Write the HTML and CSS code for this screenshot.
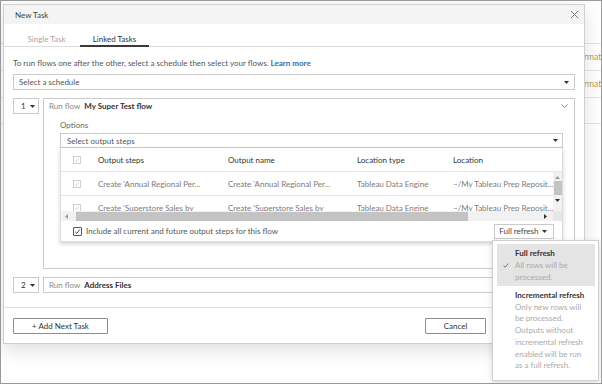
FILE: index.html
```html
<!DOCTYPE html>
<html>
<head>
<meta charset="utf-8">
<title>New Task</title>
<link rel="stylesheet" href="styles.css">
</head>
<body>
<div class="frame">
  <div class="page">
    <div class="page-head"></div>
    <div class="page-row">rmat</div>
    <div class="page-row">rmat</div>
    <div class="page-row"></div>
  </div>

  <div class="modal">
    <div class="modal-header">
      <span class="modal-title">New Task</span>
      <svg class="close" width="9" height="9" viewBox="0 0 9 9"><path d="M1 1L8 8M8 1L1 8" stroke="#777" stroke-width="1" fill="none"/></svg>
    </div>
    <div class="tabs">
      <div class="tab tab-single">Single Task</div>
      <div class="tab tab-linked active">Linked Tasks</div>
    </div>
    <div class="body">
      <p class="intro">To run flows one after the other, select a schedule then select your flows. <a class="learn">Learn more</a></p>
      <div class="select">
        <span>Select a schedule</span>
        <svg class="caret" width="5" height="3" viewBox="0 0 5 3"><path d="M0 0H5L2.5 3Z" fill="#333"/></svg>
      </div>

      <div class="task">
        <div class="num"><span>1</span><svg class="caret" width="5" height="3" viewBox="0 0 5 3"><path d="M0 0H5L2.5 3Z" fill="#333"/></svg></div>
        <div class="flow">
          <div class="flow-head">
            <span class="run">Run flow</span><span class="flow-name">My Super Test flow</span>
            <svg class="chev" width="7" height="4" viewBox="0 0 7 4"><path d="M0.5 0.5L3.5 3.5L6.5 0.5" stroke="#777" stroke-width="0.9" fill="none"/></svg>
          </div>
          <div class="options">
            <div class="opt-label">Options</div>
            <div class="select select-steps">
              <span>Select output steps</span>
              <svg class="caret" width="5" height="3" viewBox="0 0 5 3"><path d="M0 0H5L2.5 3Z" fill="#333"/></svg>
            </div>
            <div class="panel">
              <div class="grid-row grid-head">
                <div class="c1"><span class="cb cb-off"><svg width="6" height="6" viewBox="0 0 6 6"><path d="M1 3.2L2.4 4.6L5 1.4" stroke="#ccc" stroke-width="0.8" fill="none"/></svg></span></div>
                <div class="c2">Output steps</div>
                <div class="c3">Output name</div>
                <div class="c4">Location type</div>
                <div class="c5">Location</div>
              </div>
              <div class="grid-body">
                <div class="rows">
                  <div class="grid-row">
                    <div class="c1"><span class="cb cb-off"><svg width="6" height="6" viewBox="0 0 6 6"><path d="M1 3.2L2.4 4.6L5 1.4" stroke="#ccc" stroke-width="0.8" fill="none"/></svg></span></div>
                    <div class="c2">Create 'Annual Regional Per...</div>
                    <div class="c3">Create 'Annual Regional Per...</div>
                    <div class="c4">Tableau Data Engine</div>
                    <div class="c5">~/My Tableau Prep Reposit...</div>
                  </div>
                  <div class="grid-row">
                    <div class="c1"><span class="cb cb-off"><svg width="6" height="6" viewBox="0 0 6 6"><path d="M1 3.2L2.4 4.6L5 1.4" stroke="#ccc" stroke-width="0.8" fill="none"/></svg></span></div>
                    <div class="c2">Create 'Superstore Sales by</div>
                    <div class="c3">Create 'Superstore Sales by</div>
                    <div class="c4">Tableau Data Engine</div>
                    <div class="c5">~/My Tableau Prep Reposit...</div>
                  </div>
                </div>
                <div class="vscroll">
                  <svg class="arrow" width="5" height="3" viewBox="0 0 5 3"><path d="M0 3H5L2.5 0Z" fill="#999"/></svg>
                  <div class="vthumb"></div>
                  <svg class="arrow" width="5" height="3" viewBox="0 0 5 3"><path d="M0 0H5L2.5 3Z" fill="#333"/></svg>
                </div>
              </div>
              <div class="hscroll">
                <div class="htrack">
                  <svg class="arrow" width="3" height="5" viewBox="0 0 3 5"><path d="M3 0V5L0 2.5Z" fill="#999"/></svg>
                  <div class="hthumb"></div>
                  <svg class="arrow" width="3" height="5" viewBox="0 0 3 5"><path d="M0 0V5L3 2.5Z" fill="#333"/></svg>
                </div>
                <div class="corner"></div>
              </div>
              <div class="include">
                <span class="cb cb-on"><svg width="7" height="7" viewBox="0 0 7 7"><path d="M1.2 3.8L2.8 5.4L5.8 1.4" stroke="#333" stroke-width="0.9" fill="none"/></svg></span>
                <span class="include-text">Include all current and future output steps for this flow</span>
                <div class="refresh-btn"><span>Full refresh</span><svg class="caret" width="5" height="3" viewBox="0 0 5 3"><path d="M0 0H5L2.5 3Z" fill="#333"/></svg></div>
              </div>
            </div>
          </div>
        </div>
      </div>

      <div class="task task-2">
        <div class="num"><span>2</span><svg class="caret" width="5" height="3" viewBox="0 0 5 3"><path d="M0 0H5L2.5 3Z" fill="#333"/></svg></div>
        <div class="flow flow-closed">
          <div class="flow-head">
            <span class="run">Run flow</span><span class="flow-name">Address Files</span>
          </div>
        </div>
      </div>
    </div>
    <div class="footer">
      <button class="btn btn-add">+ Add Next Task</button>
      <button class="btn btn-cancel">Cancel</button>
    </div>
  </div>

  <div class="menu">
    <div class="menu-item selected">
      <svg class="check" width="6" height="5" viewBox="0 0 6 5"><path d="M0.6 2.6L2 4.2L5.4 0.6" stroke="#555" stroke-width="0.8" fill="none"/></svg>
      <div class="menu-title">Full refresh</div>
      <div class="menu-desc">All rows will be<br>processed.</div>
    </div>
    <div class="menu-item">
      <div class="menu-title">Incremental refresh</div>
      <div class="menu-desc">Only new rows will<br>be processed.<br>Outputs without<br>incremental refresh<br>enabled will be run<br>as a full refresh.</div>
    </div>
  </div>
</div>
</body>
</html>
```

FILE: styles.css
```css
* { box-sizing: border-box; }
html, body { margin: 0; padding: 0; background: #fff; }
body { font-family: Lato, "Liberation Sans", sans-serif; font-size: 8px; color: #333; }

.frame {
  position: relative;
  width: 602px;
  height: 384px;
  border: 1px solid #9a9a9a;
  overflow: hidden;
  background: #fff;
}

/* page behind the modal */
.page { width: 100%; }
.page-head { height: 43px; border-bottom: 1px solid #e4e4e4; }
.page-row {
  height: 27px;
  border-bottom: 1px solid #e4e4e4;
  padding-left: 583px;
  line-height: 27px;
  color: #b89858;
  white-space: nowrap;
  font-size: 8.5px;
}
.page-row:last-child { height: 26px; }

/* modal */
.modal {
  position: absolute;
  left: 2px;
  top: 3px;
  width: 582px;
  height: 340px;
  border: 1px solid #cfcfcf;
  background: #fff;
  box-shadow: 0 6px 18px rgba(0,0,0,0.13);
  display: flex;
  flex-direction: column;
}
.modal-header {
  height: 19px;
  background: #f4f4f4;
  display: flex;
  align-items: center;
  justify-content: space-between;
  padding: 0 5px 0 11px;
}
.modal-title { color: #444; font-size: 8px; }
.close { display: block; }

.tabs {
  height: 23px;
  display: flex;
  border-bottom: 1px solid #dcdcdc;
  padding-left: 9px;
}
.tab {
  height: 22px;
  padding-top: 10px;
  line-height: 10px;
  text-align: center;
  white-space: nowrap;
}
.tab-single { width: 67px; color: #a6a6a6; }
.tab-linked { width: 69px; color: #333; border-bottom: 2px solid #3a3a3a; height: 23px; }

.body { padding: 0 9px; }
.intro {
  margin: 10px 0 5px;
  line-height: 12px;
  color: #555;
  white-space: nowrap;
}
.learn { color: #1f6fb4; font-weight: 700; }

.select {
  height: 16px;
  border: 1px solid #cacaca;
  display: flex;
  align-items: center;
  justify-content: space-between;
  padding: 0 5px 0 5px;
  color: #555;
}
.caret { display: block; }

.task { display: flex; margin-top: 8px; align-items: flex-start; }
.task-2 { margin-top: 8px; }
.num {
  width: 26px;
  height: 16px;
  border: 1px solid #cacaca;
  display: flex;
  align-items: center;
  gap: 4px;
  padding-left: 7px;
  flex: none;
}
.flow {
  flex: 1;
  margin-left: 4px;
  border: 1px solid #cacaca;
  padding-bottom: 26px;
}
.flow-closed { padding-bottom: 0; height: 16px; }
.flow-head {
  height: 14px;
  display: flex;
  align-items: center;
  padding: 0 5px;
}
.run { color: #8a8a8a; margin-right: 4px; }
.flow-name { color: #333; font-weight: 700; }
.chev { margin-left: auto; margin-right: 1px; display: block; }

.options { padding: 7px 11px 0 16px; }
.opt-label { line-height: 10px; color: #666; margin-bottom: 3px; }
.select-steps { height: 15px; padding-left: 6px; padding-right: 4px; }

.panel {
  border: 1px solid #dedede;
  border-top: none;
  background: #fff;
  box-shadow: 0 2px 4px rgba(0,0,0,0.18);
}
.grid-row {
  display: flex;
  height: 24px;
  align-items: center;
  border-bottom: 1px solid #e6e6e6;
  white-space: nowrap;
  color: #7a7a7a;
}
.grid-head { color: #333; }
.grid-row > div { overflow: hidden; }
.c1 { width: 37px; flex: none; padding-left: 12px; }
.c2 { width: 130px; flex: none; }
.c3 { width: 129px; flex: none; }
.c4 { width: 96px; flex: none; }
.c5 { flex: 1; min-width: 0; }

.cb {
  display: flex;
  align-items: center;
  justify-content: center;
  width: 8px;
  height: 8px;
  border: 1px solid #cfcfcf;
  background: #fff;
}
.cb svg { display: block; }
.cb-on { width: 9px; height: 9px; border: 1px solid #555; border-radius: 1px; flex: none; }

.grid-body { display: flex; height: 39px; }
.rows { flex: 1; overflow: hidden; min-width: 0; }
.vscroll {
  width: 9px;
  flex: none;
  background: #f1f1f1;
  display: flex;
  flex-direction: column;
  align-items: center;
  padding-top: 4px;
}
.vthumb { width: 8px; height: 14px; background: #c3c3c3; margin: 2px 0 4px; }

.hscroll { display: flex; height: 10px; }
.htrack {
  flex: 1;
  background: #f1f1f1;
  display: flex;
  align-items: center;
  padding: 0 6px 0 4px;
}
.hthumb { width: 392px; height: 9px; background: #c3c3c3; margin-left: 8px; margin-right: auto; }
.corner { width: 9px; background: #e6e6e6; }
.arrow { display: block; flex: none; }

.include {
  height: 20px;
  display: flex;
  align-items: center;
  padding: 0 8px 0 12px;
}
.include-text { margin-left: 4px; color: #555; white-space: nowrap; }
.refresh-btn {
  margin-left: auto;
  width: 60px;
  height: 15px;
  border: 1px solid #cacaca;
  background: #fff;
  display: flex;
  align-items: center;
  justify-content: space-between;
  padding: 0 6px 0 4px;
  color: #444;
}

.footer {
  margin-top: auto;
  border-top: 1px solid #dedede;
  padding: 10px 9px 8px;
  display: flex;
  justify-content: space-between;
  height: 36px;
}
.btn {
  font-family: inherit;
  font-size: 8px;
  height: 16px;
  border: 1px solid #8c8c8c;
  border-radius: 1px;
  background: #fff;
  color: #333;
  padding: 0;
}
.btn-add { width: 95px; }
.btn-cancel { width: 61px; margin-right: 89px; }

/* dropdown menu */
.menu {
  position: absolute;
  left: 491px;
  top: 239px;
  width: 107px;
  padding: 3px 3px 5px 4px;
  background: #fff;
  border: 1px solid #d0d0d0;
  box-shadow: 0 2px 6px rgba(0,0,0,0.15);
}
.menu-item {
  position: relative;
  padding: 3px 4px 3px 18px;
  line-height: 12px;
}
.menu-item.selected { background: #e4e4e4; }
.menu-title { font-weight: 700; color: #333; }
.menu-desc { color: #aaa; line-height: 12px; }
.menu-item + .menu-item { padding-top: 4px; line-height: 11.7px; }
.menu-item + .menu-item .menu-desc { line-height: 11.7px; }
.check { position: absolute; left: 6px; top: 19px; }
```
